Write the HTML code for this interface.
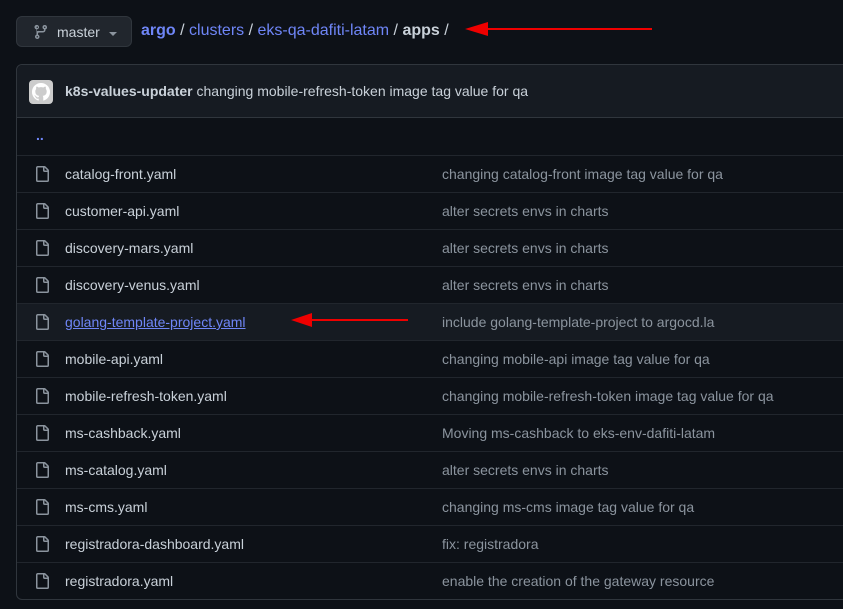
<!DOCTYPE html>
<html><head><style>
body{margin:0;background:#0d1117;font-family:"Liberation Sans",sans-serif;font-size:14px;color:#c9d1d9;width:843px;height:609px;overflow:hidden;position:relative}
.btn{position:absolute;left:16px;top:16px;width:116px;height:31px;box-sizing:border-box;border:1px solid #30363d;border-radius:6px;background:#21262d}
.btn span{position:absolute;left:40px;top:7px;color:#c9d1d9}
.crumb{position:absolute;left:141px;top:22px;font-size:16px;color:#c9d1d9}
.crumb a{color:#6f86f7;text-decoration:none}
.box{position:absolute;left:16px;top:64px;width:900px;height:536px;box-sizing:border-box;border:1px solid #30363d;border-radius:6px}
.hdr{position:absolute;left:0;top:0;right:0;height:53px;box-sizing:border-box;background:#161b22;border-bottom:1px solid #30363d;border-radius:6px 6px 0 0}
.av{position:absolute;left:12px;top:15px;width:24px;height:24px;background:#ccc;border-radius:4px}
.hdr .t{position:absolute;left:48px;top:18px}
.row{position:absolute;left:0;right:0;height:37px;border-top:1px solid #21262d;box-sizing:border-box}
.row .n{position:absolute;left:48px;top:10px}
.row .m{position:absolute;left:425px;top:10px;color:#8b949e}
.row svg{position:absolute;left:17px;top:10px}
</style></head><body>
<div class="btn"><svg width="16" height="16" viewBox="0 0 16 16" style="position:absolute;left:16px;top:7px" fill="#8b949e"><path d="M9.5 3.25a2.25 2.25 0 1 1 3 2.12V6A2.5 2.5 0 0 1 10 8.5H6a1 1 0 0 0-1 1v1.13a2.25 2.25 0 1 1-1.5 0V5.37a2.25 2.250 1 1 1.5 0v1.82A2.5 2.5 0 0 1 6 7h4a1 1 0 0 0 1-1v-.63A2.25 2.25 0 0 1 9.5 3.25Zm-6 0a.75.75 0 1 0 1.5 0 .75.75 0 0 0-1.5 0Zm8.25-.75a.75.75 0 1 0 0 1.5.75.75 0 0 0 0-1.5ZM4.25 12a.75.75 0 1 0 0 1.5.75.75 0 0 0 0-1.5Z"/></svg><span>master</span><svg width="10" height="6" style="position:absolute;left:91px;top:14px"><path d="M1 1h8L5 5z" fill="#8b949e"/></svg></div>
<div class="crumb"><a href="#"><b>argo</b></a> / <a href="#">clusters</a> / <a href="#">eks-qa-dafiti-latam</a> / <b>apps</b> /</div>
<svg width="200" height="20" style="position:absolute;left:460px;top:19px"><path d="M10 10H192" stroke="#e00" stroke-width="2"/><path d="M5 10L28 3V17Z" fill="#e00"/></svg>
<div class="box">
<div class="hdr"><div class="av"><svg width="24" height="24" viewBox="0 0 16 16"><path fill="#fff" d="M8 2a6 6 0 0 0-1.9 11.7c.3 0 .4-.1.4-.3v-1c-1.7.4-2-.8-2-.8-.3-.7-.7-.9-.7-.9-.5-.4.1-.4.1-.4.6 0 .9.6.9.6.5.9 1.4.7 1.7.5 0-.4.2-.7.4-.8-1.3-.2-2.7-.7-2.700-3 0-.6.2-1.2.6-1.6 0-.2-.2-.8.1-1.6 0 0 .5-.2 1.6.6a5.5 5.5 0 0 1 3 0c1.1-.8 1.6-.6 1.6-.6.3.8.1 1.4.1 1.6.4.4.6 1 .6 1.6 0 2.3-1.4 2.8-2.7 3 .2.2.4.6.4 1.1v1.7c0 .2.1.4.4.3A6 6 0 0 0 8 2Z"/></svg></div><div class="t"><b>k8s-values-updater</b> changing mobile-refresh-token image tag value for qa</div></div>
<div class="row" style="top:53px;border-top:none"><span style="position:absolute;left:19px;top:9px;color:#6f86f7;font-weight:bold">..</span></div>
<div id="rows"></div>
</div>
<svg width="130" height="20" style="position:absolute;left:288px;top:310px"><path d="M10 10H120" stroke="#e00" stroke-width="2"/><path d="M3 10L24 3V17Z" fill="#e00"/></svg>
<script>
var d=[["catalog-front.yaml","changing catalog-front image tag value for qa"],["customer-api.yaml","alter secrets envs in charts"],["discovery-mars.yaml","alter secrets envs in charts"],["discovery-venus.yaml","alter secrets envs in charts"],["golang-template-project.yaml","include golang-template-project to argocd.la"],["mobile-api.yaml","changing mobile-api image tag value for qa"],["mobile-refresh-token.yaml","changing mobile-refresh-token image tag value for qa"],["ms-cashback.yaml","Moving ms-cashback to eks-env-dafiti-latam"],["ms-catalog.yaml","alter secrets envs in charts"],["ms-cms.yaml","changing ms-cms image tag value for qa"],["registradora-dashboard.yaml","fix: registradora"],["registradora.yaml","enable the creation of the gateway resource"]];
var h="";d.forEach(function(r,i){var g=i==4;h+='<div class="row" style="top:'+(90+i*37)+'px;'+(g?'background:#161b22':'')+'"><svg width="16" height="16" viewBox="0 0 16 16"><path fill="#8b949e" d="M2 1.75C2 .78 2.78 0 3.75 0h6.59c.46 0 .91.18 1.24.51l2.91 2.91c.33.33.51.78.51 1.24v9.59A1.75 1.75 0 0 1 13.25 16h-9.5A1.75 1.75 0 0 1 2 14.25Zm1.75-.25a.25.25 0 0 0-.25.25v12.5c0 .14.11.25.25.25h9.5a.25.25 0 0 0 .25-.25V6h-2.75A1.75 1.75 0 0 1 9 4.25V1.5Zm6.75.06V4.25c0 .14.11.25.25.25h2.69Z"/></svg><span class="n" style="'+(g?'color:#6f86f7;text-decoration:underline':'')+'">'+r[0]+'</span><span class="m">'+r[1]+'</span></div>'});
document.getElementById("rows").outerHTML=h;
</script>
</body></html>
